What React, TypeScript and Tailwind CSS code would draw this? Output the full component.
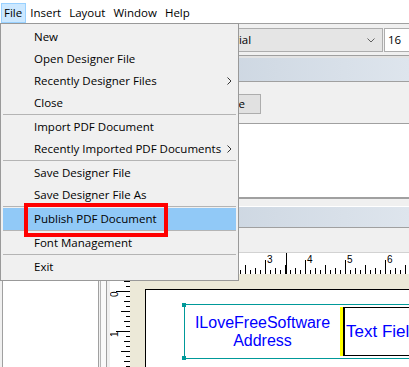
import { Fragment } from 'react'

type Item = { label: string; sub?: boolean; active?: boolean } | 'sep'

const items: Item[] = [
  { label: 'New' },
  { label: 'Open Designer File' },
  { label: 'Recently Designer Files', sub: true },
  { label: 'Close' },
  'sep',
  { label: 'Import PDF Document' },
  { label: 'Recently Imported PDF Documents', sub: true },
  'sep',
  { label: 'Save Designer File' },
  { label: 'Save Designer File As' },
  'sep',
  { label: 'Publish PDF Document', active: true },
  'sep',
  { label: 'Font Management' },
  'sep',
  { label: 'Exit' },
]

const bar = ['File', 'Insert', 'Layout', 'Window', 'Help']

function tickLen(i: number) {
  if (i % 8 === 0) return 14
  if (i % 4 === 0) return 9
  if (i % 2 === 0) return 6
  return 4
}

function HRuler() {
  // origin sits at the page's left edge, 40px per unit, 8 ticks per unit
  const origin = 35
  const ticks = Array.from({ length: 62 }, (_, k) => k - 6)
  return (
    <svg width="300" height="21" className="block">
      {ticks.map((i) => {
        const x = origin + i * 5
        const h = tickLen(i)
        return <rect key={i} x={x} y={21 - h} width="1" height={h} fill="#000" />
      })}
      {ticks
        .filter((i) => i % 8 === 0 && i >= 0 && i <= 48)
        .map((i) => (
          <text
            key={'t' + i}
            x={origin + i * 5 + 2}
            y={10}
            fontSize="10"
            fontFamily="'Liberation Sans', Arial, sans-serif"
            fill="#000"
          >
            {i / 8}
          </text>
        ))}
      <rect x={176} y={0} width="1" height="21" fill="#000" />
    </svg>
  )
}

function VRuler() {
  const origin = 17
  const ticks = Array.from({ length: 22 }, (_, k) => k - 3)
  return (
    <svg width="20" height="100" className="block">
      {ticks.map((i) => {
        const y = origin + i * 5
        const w = tickLen(i)
        return <rect key={i} x={20 - w} y={y} width={w} height="1" fill="#000" />
      })}
      {[0, 8].map((i) => {
        const y = origin + i * 5 + 6
        return (
          <text
            key={'t' + i}
            x={8}
            y={y}
            transform={`rotate(-90 8 ${y})`}
            fontSize="10"
            fontFamily="'Liberation Sans', Arial, sans-serif"
            fill="#000"
          >
            {i / 8}
          </text>
        )
      })}
    </svg>
  )
}

function FileMenu() {
  return (
    <div className="absolute left-0 top-[23px] z-10 w-[239px] border border-[#999999] bg-[#f0f0f0] py-[2px] text-[11.5px] text-black">
      {items.map((it, idx) =>
        it === 'sep' ? (
          <div key={idx} className="mx-[2px] h-[2px] border-t border-[#b4b4b4]" />
        ) : (
          <div
            key={idx}
            className={
              'mx-[2px] flex h-[22px] items-center justify-between pl-[31px] pr-[4px] ' +
              (it.active ? 'bg-[#91c9f7]' : '')
            }
          >
            <span>{it.label}</span>
            {it.sub && (
              <svg width="5" height="8" viewBox="0 0 5 8">
                <polyline points="0.5,0.5 4,4 0.5,7.5" fill="none" stroke="#333" strokeWidth="1" />
              </svg>
            )}
          </div>
        )
      )}
    </div>
  )
}

export default function App() {
  return (
    <div className="relative flex h-[367px] w-[409px] flex-col overflow-hidden bg-[#f0f0f0] font-['Open_Sans','Noto_Sans',sans-serif] text-[11.5px] text-black">
      {/* menu bar */}
      <div className="flex h-[23px] flex-none items-start bg-white pl-[1px] pt-[3px]">
        {bar.map((b) => (
          <span
            key={b}
            className={
              'flex h-[20px] items-center border px-[3px] ' +
              (b === 'File' ? 'border-[#99d1ff] bg-[#cce8ff] pl-[2px]' : 'border-transparent')
            }
          >
            {b}
          </span>
        ))}
      </div>

      {/* toolbar */}
      <div className="flex h-[32px] flex-none border-t border-[#a0a0a0] pl-[222px] pt-[4px]">
        <div className="flex h-[24px] w-[161px] flex-none items-center justify-between border border-[#adadad] bg-[#e5e5e5] pl-[4px] pr-[7px]">
          <span>Arial</span>
          <svg width="8" height="5" viewBox="0 0 8 5">
            <polyline points="0.5,0.5 4,4 7.5,0.5" fill="none" stroke="#606060" strokeWidth="1" />
          </svg>
        </div>
        <div className="ml-[1px] flex h-[24px] w-[40px] flex-none items-center border border-[#adadad] bg-white pl-[3px]">
          16
        </div>
      </div>
      <div className="h-[3px] flex-none border-t border-[#a0a0a0] bg-[#e3e3e3]" />
      <div className="h-[24px] flex-none border-b border-[#a0a0a0] bg-gradient-to-r from-[#b9c6d4] to-[#dee5ed]" />

      {/* button row */}
      <div className="h-[41px] flex-none pl-[160px] pt-[12px]">
        <div className="flex h-[20px] w-[101px] items-center justify-end border border-[#adadad] bg-[#e1e1e1] pr-[15px]">
          Delete
        </div>
      </div>

      <div className="h-[76px] flex-none border-b-2 border-t border-[#a0a0a0] bg-white" />
      <div className="h-[7px] flex-none" />
      <div className="h-[22px] flex-none border-b border-t border-b-[#a0a0a0] border-t-white bg-gradient-to-r from-[#b9c6d4] to-[#dee5ed]" />
      <div className="h-[25px] flex-none border-b border-[#d2d2d2]" />

      {/* work area */}
      <div className="flex min-h-0 flex-1">
        <div className="ml-[2px] w-[97px] flex-none border-x border-[#a0a0a0] bg-white" />
        <div className="flex w-[11px] flex-none">
          <span className="w-[1px]" />
          <span className="w-[7px] border-x border-x-[#b4b4b4] border-r-[#a0a0a0] bg-[#f9f9f9]" />
          <span className="w-[3px]" />
        </div>
        <div className="flex min-w-0 flex-1 flex-col">
          <div className="h-[21px] flex-none overflow-hidden bg-white">
            <HRuler />
          </div>
          <div className="flex min-h-0 flex-1">
            <div className="w-[20px] flex-none overflow-hidden bg-white">
              <VRuler />
            </div>
            <div className="min-w-0 flex-1 overflow-hidden bg-[#ece9d8] pl-[15px] pt-[15px]">
              <div className="relative h-[200px] w-[400px] border border-black bg-white">
                <div className="absolute left-[38px] top-[14px] flex h-[55px] w-[320px] border border-[#009999]">
                  <span className="absolute -left-[3px] -top-[2px] h-[4px] w-[4px] bg-[#009999]" />
                  <span className="absolute -bottom-[2px] -left-[3px] h-[4px] w-[4px] bg-[#009999]" />
                  <div className="flex w-[155px] flex-none flex-col items-center justify-center font-['Liberation_Sans',Arial,sans-serif] text-[16px] leading-[18px] text-[#0000ff]">
                    <span>ILoveFreeSoftware</span>
                    <span>Address</span>
                  </div>
                  <div className="my-[2px] flex flex-1">
                    <span className="w-[3px] flex-none bg-[#ffff00]" />
                    <div className="flex flex-1 items-center border-y border-l-2 border-black pl-[1px] font-['Liberation_Sans',Arial,sans-serif] text-[17px] text-[#0000ff]">
                      Text Field
                    </div>
                  </div>
                </div>
              </div>
            </div>
          </div>
        </div>
      </div>

      <FileMenu />
      {/* annotation box */}
      <div className="absolute left-[24px] top-[203px] z-20 h-[34px] w-[144px] border-4 border-[#ff0000]" />
    </div>
  )
}
